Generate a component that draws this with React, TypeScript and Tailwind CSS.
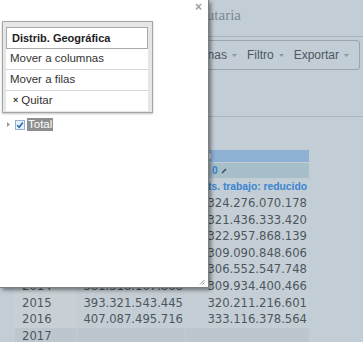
const rows = [
  ['2009', '398.204.118.540', '324.276.070.178'],
  ['2010', '395.120.880.316', '321.436.333.420'],
  ['2011', '397.781.205.902', '322.957.868.139'],
  ['2012', '381.667.451.209', '309.090.848.606'],
  ['2013', '379.542.730.113', '306.552.547.748'],
  ['2014', '381.318.107.868', '309.934.400.466'],
  ['2015', '393.321.543.445', '320.211.216.601'],
  ['2016', '407.087.495.716', '333.116.378.564'],
  ['2017', '', ''],
];

const Caret = () => (
  <svg width="5" height="3" viewBox="0 0 5 3" className="ml-[5px]">
    <polygon points="0,0 5,0 2.5,3" fill="#8a959d" />
  </svg>
);

const ToolButton = ({ label }: { label: string }) => (
  <div className="flex flex-none items-center whitespace-nowrap">
    <span>{label}</span>
    <Caret />
  </div>
);

export default function App() {
  return (
    <div className="relative h-[342px] w-[363px] overflow-hidden bg-[#c2cdd5] font-['Liberation_Sans',Arial,sans-serif]">
      {/* page behind the dialog */}
      <div className="flex flex-col">
        <div className="h-[37px] border-b border-[#a9b4bc]">
          <div className="w-[241px] whitespace-nowrap pt-[5px] text-right font-['Liberation_Serif',serif] text-[15px] leading-[20px] text-[#7b8791]">
            Estadística Tributaria
          </div>
        </div>
        <div className="ml-[100px] mr-[3px] mt-[3px] flex h-[30px] items-center justify-end gap-[10px] rounded-[3px] border border-[#9aa5ad] pr-[10px] text-[12px] text-[#4d5862]">
          <ToolButton label="Filas" />
          <ToolButton label="Columnas" />
          <ToolButton label="Filtro" />
          <ToolButton label="Exportar" />
        </div>
        <div className="h-[47px] border-b border-[#aab5bd]" />

        <div className="ml-[15px] mt-[33px] flex w-[294px] flex-col gap-px">
          <div className="grid h-[12px] grid-cols-[61px_108px_123px] gap-x-px">
            <div />
            <div className="bg-[#8db0d3]" />
            <div className="bg-[#8db0d3] pl-[5px] text-[10.3px] font-bold leading-[12px] text-[#eef3f8]">Año</div>
          </div>
          <div className="grid h-[15px] grid-cols-[61px_108px_123px] gap-x-px">
            <div />
            <div className="bg-[#a6bfc9]" />
            <div className="flex items-center bg-[#a6bfc9] pl-[3px] text-[10.3px] font-bold text-[#3a84d0]">
              <span>Año 0</span>
              <svg width="6" height="6" viewBox="0 0 6 6" className="ml-[3px]">
                <path d="M0.5 5.5 L1 4 L4.5 0.5 L5.5 1.5 L2 5 Z" fill="#3d4a55" />
              </svg>
            </div>
          </div>
          <div className="grid h-[15px] grid-cols-[61px_108px_123px] gap-x-px">
            <div />
            <div />
            <div className="flex items-center justify-end whitespace-nowrap pr-[2px] text-[10.3px] font-bold text-[#3a84d0]">
              Rdts. trabajo: reducido
            </div>
          </div>
          {rows.map(([year, a, b]) => {
            const last = year === '2017';
            return (
              <div
                key={year}
                className="grid h-[15.6px] grid-cols-[61px_108px_123px] gap-x-px font-['DejaVu_Sans',Verdana,sans-serif] text-[11.6px] text-[#4b5760]"
              >
                <div className={`flex items-center pl-[7px] ${last ? 'bg-[#bcc6cc]' : 'bg-[#c8d0d5]'}`}>{year}</div>
                <div className={`flex items-center justify-end pr-[2px] ${last ? 'bg-[#bcc6cc]' : 'bg-[#c3cdd3]'}`}>{a}</div>
                <div className={`flex items-center justify-end pr-[2px] ${last ? 'bg-[#bcc6cc]' : 'bg-[#c5ced4]'}`}>{b}</div>
              </div>
            );
          })}
        </div>
      </div>

      {/* dialog */}
      <div className="absolute left-0 top-0 flex h-[288px] w-[209px] flex-col border-b border-r border-[#7f7f7f] bg-white pl-[2px] pt-[21px] shadow-[2px_2px_4px_rgba(0,0,0,0.45)]">
        <span className="absolute right-[6px] top-[-2px] text-[12px] font-bold text-[#a0a0a0]">×</span>

        <div className="flex h-[92px] w-[151px] flex-col border border-[#a6a6a6] bg-[#e6e6e6] pl-[3px] pt-[5px] shadow-[0_1px_2px_rgba(0,0,0,0.25)]">
          <div className="flex w-[142px] flex-col">
            <div className="flex h-[22px] items-center border border-[#a9a9a9] bg-white pl-[5px] text-[11px] font-bold text-[#222]">
              Distrib. Geográfica
            </div>
            <div className="flex h-[21px] items-center border-b border-[#d6d6d6] bg-white pl-[4px] text-[11.5px] text-[#333]">
              Mover a columnas
            </div>
            <div className="flex h-[21px] items-center border-b border-[#d6d6d6] bg-white pl-[4px] text-[11.5px] text-[#333]">
              Mover a filas
            </div>
            <div className="flex h-[20px] items-center bg-white pl-[7px] text-[11.5px] text-[#333]">
              <span className="mr-[3px] text-[9px] font-bold">×</span>
              Quitar
            </div>
          </div>
        </div>

        <div className="ml-[5px] mt-[5px] flex h-[13px] items-center">
          <svg width="3" height="5" viewBox="0 0 3 5">
            <polygon points="0,0 3,2.5 0,5" fill="#9a9a9a" />
          </svg>
          <div className="ml-[5px] flex h-[10px] w-[10px] items-center justify-center border border-[#8fb2d2] bg-[#e9f1fa]">
            <svg width="8" height="8" viewBox="0 0 8 8">
              <polyline points="1.2,4.2 3.2,6.2 6.8,1.6" fill="none" stroke="#2668b8" strokeWidth="1.6" />
            </svg>
          </div>
          <div className="ml-[2px] flex h-[13px] items-center bg-[#8e8e8e] px-[1px] text-[11.5px] text-white">Total</div>
        </div>

        <svg width="6" height="6" viewBox="0 0 6 6" className="absolute bottom-[2px] right-[3px]">
          <path d="M5.5 1 L1 5.5 M5.5 3.5 L3.5 5.5" stroke="#8c8c8c" strokeWidth="1" />
        </svg>
      </div>
    </div>
  );
}
